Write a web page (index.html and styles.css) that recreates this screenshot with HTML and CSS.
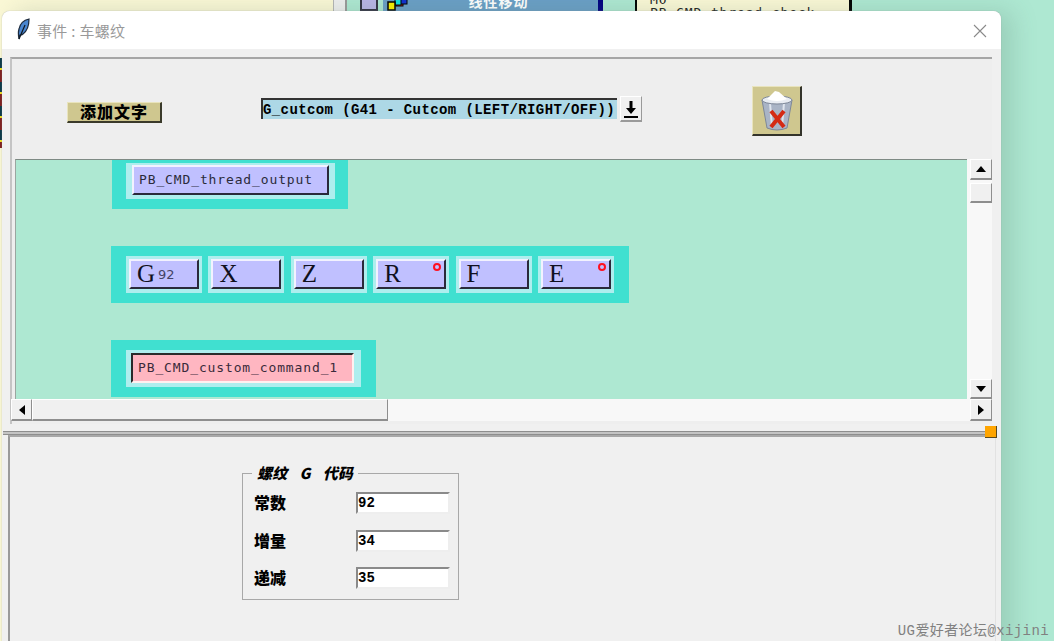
FILE: index.html
```html
<!DOCTYPE html>
<html lang="zh">
<head>
    <meta charset="UTF-8">
    <title>事件 : 车螺纹</title>
    <link rel="stylesheet" href="styles.css">
</head>
<body>
<div class="desktop">
    <!-- windows behind the dialog, only their bottoms show -->
    <div class="backPanel"></div>
    <div class="backEdge"></div>
    <div class="backStripes"></div>
    <div class="backButton">线性移动</div>
    <div class="backIcon"></div>
    <div class="backBlocks">
        <svg width="22" height="11" viewBox="0 0 22 11">
            <rect x="9" y="-2" width="7" height="8" fill="#d02020" stroke="#000"/>
            <rect x="13" y="-4" width="7" height="8" fill="#1030d0" stroke="#000"/>
            <rect x="8" y="-3" width="6" height="8" fill="#10e0e0" stroke="#000"/>
            <rect x="1" y="2" width="7" height="8" fill="#f8f000" stroke="#000" stroke-width="1.5"/>
        </svg>
    </div>
    <div class="backTip">
        <span>M0</span>
        <span>PB_CMD_thread_check</span>
    </div>

    <div class="window">
        <div class="titlebar">
            <svg class="feather" width="16" height="22" viewBox="0 0 16 22">
                <path d="M4 21 C3 16 3 14 4 11 C5 6 9 2 14 1 C14 7 12 13 8 16 C7 17 6 17 5 17 Z" fill="#4a86d0" stroke="#1c2a3c" stroke-width="1.2"/>
                <path d="M4 21 L10 7" stroke="#101820" stroke-width="1.2" fill="none"/>
            </svg>
            <span class="titleText">事件 : 车螺纹</span>
            <svg class="closeBtn" width="14" height="14" viewBox="0 0 14 14">
                <path d="M1 1 L13 13 M13 1 L1 13" stroke="#8a8a8a" stroke-width="1.1" fill="none"/>
            </svg>
        </div>

        <div class="upper">
            <div class="toolbar">
                <div class="addText">添加文字</div>
                <div class="comboEntry">G_cutcom (G41 - Cutcom (LEFT/RIGHT/OFF))</div>
                <div class="comboArrow">
                    <svg width="16" height="20" viewBox="0 0 16 20">
                        <path d="M6.5 2 H9.5 V9 H13 L8 15 L3 9 H6.5 Z M1 17 H15 V19 H1 Z" fill="#000"/>
                    </svg>
                </div>
                <div class="trash">
                    <svg width="38" height="42" viewBox="0 0 38 42">
                        <path d="M4 10 L9 38 Q19 42 29 38 L34 10 Z" fill="#a9b4c6" stroke="#7d8798"/>
                        <path d="M12 13 L14 37 M26 13 L24 37" stroke="#dfe5ee" stroke-width="2" fill="none"/>
                        <ellipse cx="19" cy="10" rx="15" ry="4" fill="#e8ecf2" stroke="#7d8798"/>
                        <path d="M9 9 L17 1 L21 2 L29 9 Q19 13 9 9 Z" fill="#ffffff"/>
                        <path d="M13 21 L26 37 M26 21 L13 37" stroke="#d42a14" stroke-width="4" fill="none"/>
                    </svg>
                </div>
            </div>

            <div class="canvasRow">
                <div class="canvas">
                    <div class="block blockOne">
                        <div class="cell">
                            <div class="cmdBtn">PB_CMD_thread_output</div>
                        </div>
                    </div>
                    <div class="block blockTwo">
                        <div class="cell"><div class="addrBtn">G<span class="addrVal">92</span></div></div>
                        <div class="cell"><div class="addrBtn">X</div></div>
                        <div class="cell"><div class="addrBtn">Z</div></div>
                        <div class="cell"><div class="addrBtn">R<i class="marker"></i></div></div>
                        <div class="cell"><div class="addrBtn">F</div></div>
                        <div class="cell"><div class="addrBtn">E<i class="marker"></i></div></div>
                    </div>
                    <div class="block blockThree">
                        <div class="cell">
                            <div class="cmdSunk">PB_CMD_custom_command_1</div>
                        </div>
                    </div>
                </div>
                <div class="vScroll">
                    <div class="sbBtn upBtn"><svg width="10" height="6" viewBox="0 0 10 6"><path d="M5 0 L10 6 H0 Z" fill="#000"/></svg></div>
                    <div class="sbBtn thumbV"></div>
                    <div class="sbBtn downBtn"><svg width="10" height="6" viewBox="0 0 10 6"><path d="M5 6 L10 0 H0 Z" fill="#000"/></svg></div>
                </div>
            </div>

            <div class="hScroll">
                <div class="sbBtn leftBtn"><svg width="6" height="10" viewBox="0 0 6 10"><path d="M0 5 L6 0 V10 Z" fill="#000"/></svg></div>
                <div class="sbBtn thumbH"></div>
                <div class="sbBtn rightBtn"><svg width="6" height="10" viewBox="0 0 6 10"><path d="M6 5 L0 0 V10 Z" fill="#000"/></svg></div>
            </div>
        </div>

        <div class="sash"><i class="sashGrip"></i></div>

        <div class="lower">
            <fieldset class="group">
                <legend class="groupTitle">螺纹 G 代码</legend>
                <div class="field"><label class="fieldLabel">常数</label><div class="fieldInput">92</div></div>
                <div class="field"><label class="fieldLabel">增量</label><div class="fieldInput">34</div></div>
                <div class="field"><label class="fieldLabel">递减</label><div class="fieldInput">35</div></div>
            </fieldset>
        </div>
    </div>

    <div class="watermark">UG爱好者论坛@xijini</div>
</div>
</body>
</html>
```

FILE: styles.css
```css
html, body {
    margin: 0;
    padding: 0;
}
.desktop {
    position: relative;
    width: 1054px;
    height: 641px;
    overflow: hidden;
    background-color: #aee8d2;
    font-family: "Liberation Sans", "Noto Sans CJK SC", sans-serif;
}

/* stuff behind the dialog */
.backPanel {
    position: absolute;
    left: 0;
    top: 0;
    width: 333px;
    height: 641px;
    background-color: #fbf8d6;
}
.backEdge {
    position: absolute;
    left: 333px;
    top: 0;
    width: 14px;
    height: 14px;
    background-color: #eeeeee;
    border-left: 1px solid #b5b5b5;
    border-right: 2px solid #9a9a9a;
    box-sizing: border-box;
}
.backStripes {
    position: absolute;
    left: 0;
    top: 58px;
    width: 2px;
    height: 90px;
    background: repeating-linear-gradient(#0d3a4a 0, #0d3a4a 10px, #f0e020 10px, #f0e020 12px, #802020 12px, #802020 24px);
}
.backIcon {
    position: absolute;
    left: 360px;
    top: -6px;
    width: 14px;
    height: 13px;
    background-color: #b9b5e6;
    border: 2px solid #333344;
}
.backBlocks {
    position: absolute;
    left: 387px;
    top: 0;
    line-height: 0;
}
.backButton {
    position: absolute;
    left: 383px;
    top: -8px;
    width: 215px;
    height: 22px;
    padding-left: 16px;
    background-color: #6a9fc6;
    color: #ffffff;
    font-size: 14px;
    font-weight: bold;
    line-height: 20px;
    text-align: center;
    letter-spacing: 1px;
    box-sizing: border-box;
}
.backTip {
    position: absolute;
    left: 634px;
    top: -8px;
    width: 218px;
    height: 22px;
    padding: 1px 0 0 13px;
    background-color: #fbf8d6;
    border-left: 3px solid #000000;
    border-right: 3px solid #000000;
    box-sizing: border-box;
    font-family: "DejaVu Sans Mono", monospace;
    font-size: 13px;
    letter-spacing: 0.87px;
    color: #222222;
    line-height: 13px;
    overflow: hidden;
}
.backTip span {
    display: block;
}
.desktop::after {
    content: "";
    position: absolute;
    left: 598px;
    top: 0;
    width: 37px;
    height: 12px;
    background-color: #aee8d2;
    border-left: 5px solid #000080;
    box-sizing: border-box;
}

/* dialog */
.window {
    position: absolute;
    z-index: 1;
    left: 2px;
    top: 11px;
    width: 999px;
    height: 640px;
    display: flex;
    flex-direction: column;
    background-color: #f0f0f0;
    border-radius: 8px 8px 0 0;
    box-shadow: 0 0 1px #8a8a8a, 12px 0 24px rgba(80, 120, 100, 0.22);
}
.titlebar {
    height: 38px;
    flex: none;
    display: flex;
    align-items: center;
    background-color: #ffffff;
    border-radius: 8px 8px 0 0;
    padding: 0 14px 0 13px;
}
.feather {
    margin-top: -2px;
}
.titleText {
    margin-left: 6px;
    font-size: 15px;
    letter-spacing: 0.3px;
    color: #999999;
    font-family: "Noto Sans CJK SC", sans-serif;
}
.closeBtn {
    margin-left: auto;
    margin-top: 1px;
}

.upper {
    margin: 8px 9px 0 8px;
    height: 367px;
    flex: none;
    border-top: 2px solid #a6a6a6;
    border-left: 2px solid #c4c4c4;
    box-sizing: border-box;
    background-color: #eeeeee;
}
.toolbar {
    height: 100px;
    display: flex;
    align-items: flex-start;
}
.addText {
    width: 95px;
    height: 21px;
    margin: 43px 0 0 55px;
    box-sizing: border-box;
    background-color: #cfc78f;
    border-right: 2px solid #3a3a2a;
    border-bottom: 2px solid #3a3a2a;
    border-top: 1px solid #e9e4bd;
    border-left: 1px solid #e9e4bd;
    font-family: "Noto Sans CJK SC", sans-serif;
    font-weight: 900;
    font-size: 16px;
    line-height: 17px;
    text-align: center;
    color: #000000;
    letter-spacing: 1px;
}
.comboEntry {
    width: 356px;
    height: 21px;
    margin: 39px 0 0 99px;
    box-sizing: border-box;
    background-color: #add8e6;
    border-top: 2px solid #333333;
    border-left: 2px solid #333333;
    font-family: "Liberation Mono", monospace;
    font-weight: bold;
    font-size: 14px;
    line-height: 20px;
    letter-spacing: 0.4px;
    padding-left: 0;
    white-space: pre;
    color: #000000;
}
.comboArrow {
    width: 22px;
    height: 26px;
    margin: 37px 0 0 3px;
    box-sizing: border-box;
    background-color: #f0f0f0;
    border-right: 1px solid #9a9a9a;
    border-bottom: 2px solid #9a9a9a;
    border-top: 1px solid #ffffff;
    border-left: 1px solid #ffffff;
    display: flex;
    align-items: center;
    justify-content: center;
}
.trash {
    width: 50px;
    height: 50px;
    margin: 27px 0 0 110px;
    box-sizing: border-box;
    background-color: #cfc78f;
    border-right: 2px solid #33332a;
    border-bottom: 2px solid #33332a;
    border-top: 1px solid #e9e4bd;
    border-left: 1px solid #e9e4bd;
    display: flex;
    align-items: center;
    justify-content: center;
}

.canvasRow {
    height: 240px;
    display: flex;
    margin-left: 3px;
}
.canvas {
    width: 952px;
    height: 240px;
    overflow: hidden;
    flex: none;
    background-color: #aee8d2;
    border-top: 1px solid #7e8a84;
    border-left: 1px solid #9aa6a0;
    box-sizing: border-box;
}
.block {
    display: flex;
    gap: 6.4px;
    background-color: #40e0d0;
    width: fit-content;
    padding: 10px 15px;
}
.blockOne {
    margin-left: 96px;
    padding: 3px 13px 10px 14px;
}
.blockTwo {
    margin: 37px 0 0 95px;
}
.blockThree {
    margin: 37px 0 0 95px;
}
.cell {
    background-color: #aeeeee;
    padding: 3px 3px 4px 3px;
}
.blockOne .cell {
    padding: 2px 6px 4px 6px;
}
.blockThree .cell {
    padding: 3px 7px 4px 5px;
}
.cmdBtn, .addrBtn, .cmdSunk {
    box-sizing: border-box;
    color: #2b2b3a;
}
.cmdBtn, .addrBtn {
    background-color: #c0c0ff;
    border-top: 2px solid #f2f2ff;
    border-left: 2px solid #f2f2ff;
    border-right: 2px solid #2a2a3a;
    border-bottom: 2px solid #2a2a3a;
}
.cmdBtn {
    width: 197px;
    height: 30px;
    padding-left: 5px;
    font-family: "DejaVu Sans Mono", monospace;
    font-size: 13px;
    letter-spacing: 0.87px;
    line-height: 26px;
}
.addrBtn {
    position: relative;
    width: 70px;
    height: 30px;
    padding-left: 6px;
    font-family: "Liberation Serif", serif;
    font-size: 25px;
    line-height: 26px;
    color: #101020;
}
.addrVal {
    margin-left: 3px;
    font-family: "DejaVu Sans", sans-serif;
    font-size: 13px;
    vertical-align: 3px;
    color: #444466;
}
.marker {
    position: absolute;
    right: 3px;
    top: 2px;
    width: 4px;
    height: 4px;
    border: 2px solid #ff1020;
    border-radius: 50%;
}
.cmdSunk {
    width: 223px;
    height: 30px;
    padding-left: 5px;
    background-color: #ffb6c1;
    border-top: 2px solid #2a2a2a;
    border-left: 2px solid #2a2a2a;
    border-right: 2px solid #fff0f0;
    border-bottom: 2px solid #fff0f0;
    font-family: "DejaVu Sans Mono", monospace;
    font-size: 13px;
    letter-spacing: 0.87px;
    line-height: 25px;
    color: #3a2a3a;
}

/* scrollbars */
.vScroll {
    width: 25px;
    height: 240px;
    flex: none;
    box-sizing: border-box;
    padding: 0 0 0 3px;
    display: flex;
    flex-direction: column;
    background-color: #f8f8f8;
}
.sbBtn {
    box-sizing: border-box;
    background-color: #f0f0f0;
    border-top: 1px solid #ffffff;
    border-left: 1px solid #ffffff;
    border-right: 1px solid #8e8e8e;
    border-bottom: 2px solid #8e8e8e;
    display: flex;
    align-items: center;
    justify-content: center;
    flex: none;
}
.upBtn {
    width: 22px;
    height: 21px;
}
.thumbV {
    width: 22px;
    height: 20px;
    margin-top: 3px;
}
.downBtn {
    width: 22px;
    height: 20px;
    margin-top: auto;
}
.hScroll {
    display: flex;
    height: 22px;
    margin-left: -1px;
    background-color: #f8f8f8;
}
.leftBtn {
    width: 21px;
    height: 22px;
}
.thumbH {
    width: 356px;
    height: 22px;
}
.rightBtn {
    width: 22px;
    height: 22px;
    margin-left: auto;
}

.sash {
    position: relative;
    height: 4px;
    flex: none;
    margin: 7px 5px 0 1px;
    background-color: #c4c4c4;
    border-top: 1px solid #8e8e8e;
    border-bottom: 1px solid #8e8e8e;
    box-sizing: border-box;
}
.sashGrip {
    position: absolute;
    right: -1px;
    top: -6px;
    width: 12px;
    height: 12px;
    box-sizing: border-box;
    background-color: #ffa500;
    border-right: 1px solid #5a4a20;
    border-bottom: 1px solid #5a4a20;
}

.lower {
    flex: 1;
    margin: 0 5px 0 6px;
    border-left: 2px solid #9a9a9a;
    border-top: 2px solid #a8a8a8;
    border-right: 1px solid #e2e2e2;
    padding: 28px 0 0 232px;
    background-color: #f0f0f0;
}
.group {
    width: 217px;
    height: 135px;
    margin: 0;
    padding: 11px 0 0 11px;
    box-sizing: border-box;
    border: 1px solid #a8a8a8;
}
.groupTitle {
    margin-left: -2px;
    padding: 0 5px 0 5px;
    font-family: "Noto Sans CJK SC", sans-serif;
    font-style: italic;
    font-weight: 900;
    font-size: 15px;
    line-height: 16px;
    word-spacing: 9px;
    color: #000000;
}
.field {
    display: flex;
    align-items: center;
    height: 22px;
    margin-bottom: 15.5px;
}
.fieldLabel {
    width: 102px;
    padding-bottom: 2px;
    font-family: "Noto Sans CJK SC", sans-serif;
    font-weight: 900;
    font-size: 16px;
    color: #000000;
}
.fieldInput {
    width: 94px;
    height: 22px;
    box-sizing: border-box;
    background-color: #ffffff;
    border-top: 2px solid #8a8a8a;
    border-left: 2px solid #8a8a8a;
    border-right: 2px solid #eeeeee;
    border-bottom: 2px solid #eeeeee;
    font-family: "Liberation Mono", monospace;
    font-weight: bold;
    font-size: 14px;
    line-height: 18px;
    color: #000000;
}

.watermark {
    position: absolute;
    z-index: 2;
    right: 5px;
    bottom: 1px;
    font-family: "Liberation Mono", "Noto Sans CJK SC", monospace;
    font-size: 14px;
    letter-spacing: 0.4px;
    line-height: 18px;
    color: #808080;
    white-space: nowrap;
}
```
